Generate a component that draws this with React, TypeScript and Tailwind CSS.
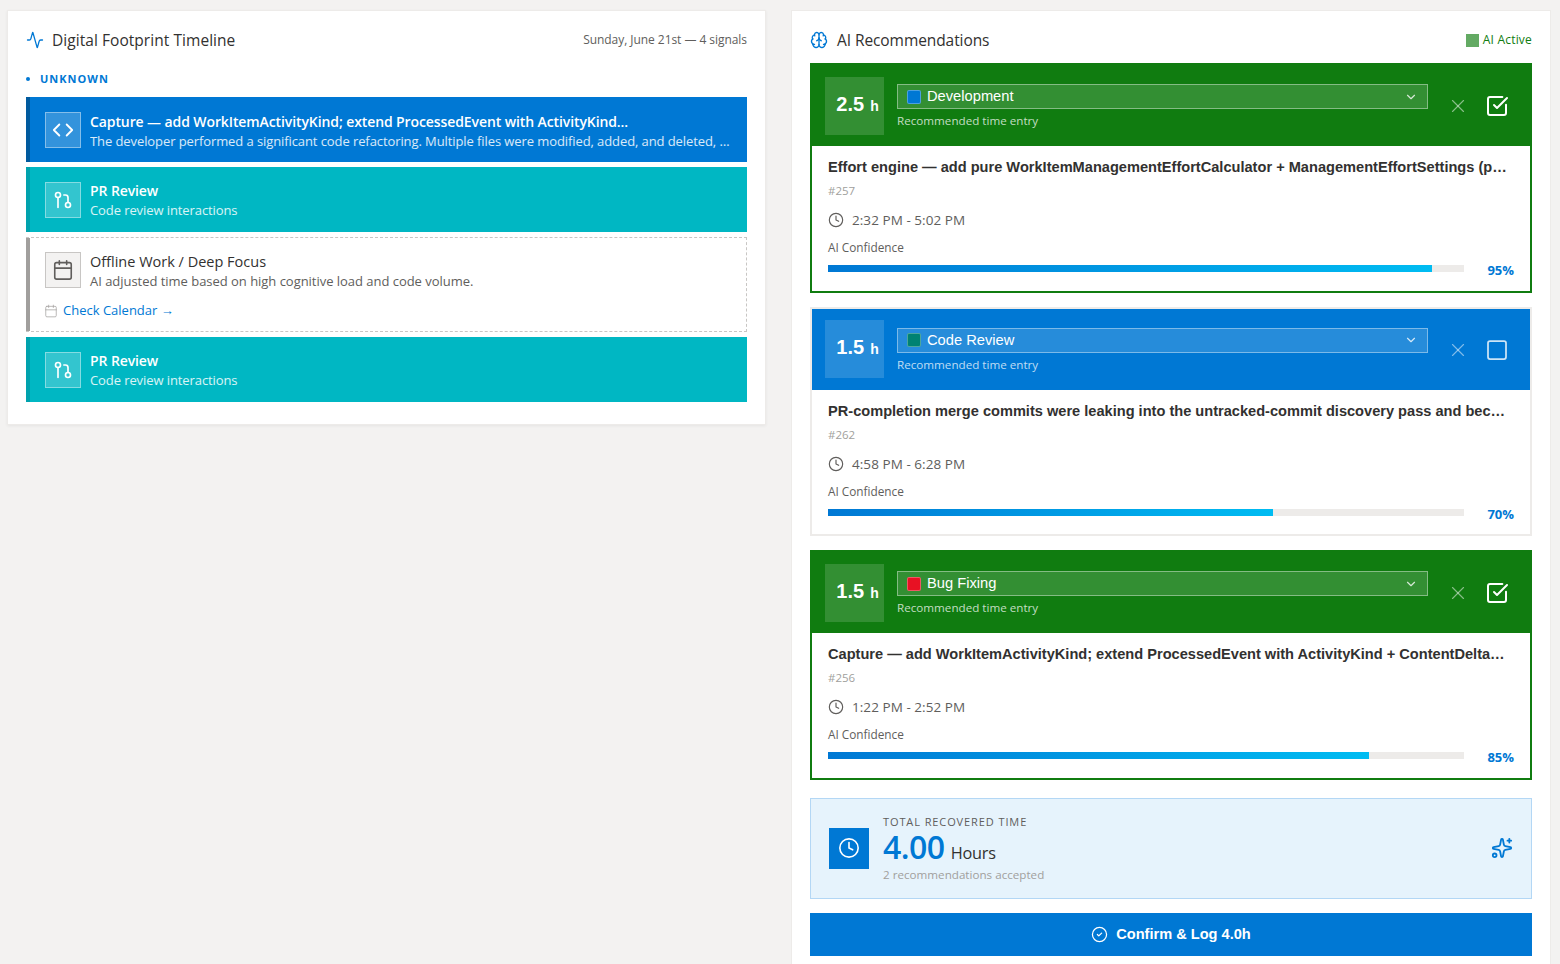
import { Activity, Brain, Code, Calendar, Clock, ChevronDown, X, SquareCheckBig, Square, CircleCheck, Sparkles } from "lucide-react";

const seg = "font-['Open_Sans',sans-serif]";

function Pr() {
  return (
    <svg width="20" height="20" viewBox="0 0 24 24" fill="none" stroke="currentColor" strokeWidth="2" strokeLinecap="round" strokeLinejoin="round">
      <circle cx="6" cy="6" r="3" />
      <circle cx="18" cy="18" r="3" />
      <path d="M6 9v12" />
      <path d="M13 6h2a3 3 0 0 1 3 3v6" />
    </svg>
  );
}

function TimelineItem({ kind, title, sub }: { kind: "blue" | "teal"; title: string; sub: string }) {
  const blue = kind === "blue";
  return (
    <div className={`flex h-[65px] items-center gap-[9px] border-l-4 pl-[15px] pr-[17px] text-white ${blue ? "bg-[#0078d4] border-[#005a9e]" : "bg-[#00b7c3] border-[#00a2ad]"}`}>
      <div className="flex h-9 w-9 shrink-0 items-center justify-center border border-white/40 bg-white/20">
        {blue ? <Code size={22} strokeWidth={2} /> : <Pr />}
      </div>
      <div className={`min-w-0 flex-1 ${blue ? "pt-[4px]" : "pt-[2px]"}`}>
        <div className={`truncate text-[14px] font-semibold leading-[20px] tracking-[-0.1px] ${seg}`}>{title}</div>
        <div className={`truncate text-[13px] leading-[19px] text-white/85 tracking-[-0.09px] ${seg}`}>{sub}</div>
      </div>
    </div>
  );
}

function Card({ color, hours, cat, swatch, title, id, time, pct, checked, barW }: { color: "green" | "blue"; hours: string; cat: string; swatch: string; title: string; id: string; time: string; pct: number; checked: boolean; barW: string }) {
  const green = color === "green";
  return (
    <div className={`border-2 ${green ? "border-[#107c10]" : "border-[#edebe9]"} bg-white`}>
      <div className={`flex h-[81px] items-center pl-[13px] pr-[21px] ${green ? "bg-[#107c10]" : "bg-[#0078d4]"}`}>
        <div className="flex h-[58px] w-[59px] shrink-0 items-baseline justify-center bg-white/15 pl-[6px] pt-[13px] font-['Liberation_Sans',sans-serif] font-bold text-white">
          <span className="text-[20px] leading-[28px]">{hours}</span>
          <span className="ml-[6px] text-[14px] leading-[28px]">h</span>
        </div>
        <div className="ml-[13px] min-w-0 flex-1 self-start pt-[19px]">
          <div className="flex h-[25px] items-center border border-white/40 bg-white/15 pl-[9px] pr-[9px] text-white">
            <span className="h-[14px] w-[14px] shrink-0 rounded-[2px] border border-white/30" style={{ backgroundColor: swatch }} />
            <span className="ml-[6px] flex-1 font-['Liberation_Sans',sans-serif] text-[14.7px] leading-[23px]">{cat}</span>
            <ChevronDown size={14} className="text-white/80" />
          </div>
          <div className={`mt-[3px] text-[11.65px] leading-[18px] text-white/75 ${seg}`}>Recommended time entry</div>
        </div>
        <X size={22} strokeWidth={1.25} className="ml-[19px] mt-[1px] shrink-0 text-white/50" />
        <div className="ml-[16px] mt-[1px] shrink-0 text-white">
          {checked ? <SquareCheckBig size={24} strokeWidth={2} /> : <Square size={24} strokeWidth={1.75} className="text-white/80" />}
        </div>
      </div>
      <div className="px-[16px] pb-[18.6px] pt-[11px]">
        <div className="truncate font-['Liberation_Sans',sans-serif] text-[14.6px] font-bold leading-[20px] text-[#323130]">{title}</div>
        <div className={`mt-[6px] text-[11.5px] leading-[16px] text-[#a19f9d] ${seg}`}>{id}</div>
        <div className="mt-[11px] flex items-center text-[#605e5c]">
          <Clock size={16} strokeWidth={1.75} />
          <span className={`ml-[8px] text-[13.5px] leading-[20px] tracking-[0.05px] ${seg}`}>{time}</span>
        </div>
        <div className={`mt-[9px] text-[11.8px] leading-[16px] text-[#605e5c] ${seg}`}>AI Confidence</div>
        <div className="mt-[10px] flex h-[7px] items-start">
          <div className="h-[7px] w-[636px] bg-[#edebe9]">
            <div className="h-full bg-gradient-to-r from-[#0078d4] to-[#00bcf2]" style={{ width: barW }} />
          </div>
          <span className={`-mt-[3px] ml-auto text-[13px] font-bold leading-[16px] text-[#0078d4] ${seg}`}>{pct}%</span>
        </div>
      </div>
    </div>
  );
}

export default function App() {
  return (
    <div className={`flex h-[964px] items-start gap-[25px] overflow-hidden bg-[#f3f2f1] pl-[7px] pr-[9px] pt-[10px] ${seg}`}>
      <section className="w-[759px] border border-[#edebe9] bg-white px-[18px] pb-[22px] pt-[17px] shadow-[0_1px_3px_rgba(0,0,0,0.06)]">
        <div className="flex h-[24px] items-center">
          <Activity size={18} strokeWidth={1.75} className="text-[#0078d4]" />
          <h2 className="ml-[8px] text-[15.5px] font-normal leading-[24px] tracking-[0.05px] text-[#323130]">Digital Footprint Timeline</h2>
          <span className="ml-auto text-[12px] tracking-[-0.05px] text-[#605e5c]">Sunday, June 21st — 4 signals</span>
        </div>
        <div className="mt-[19px] flex h-[16px] items-center text-[#0078d4]">
          <span className="h-[4px] w-[4px] rounded-full bg-[#0078d4]" />
          <span className="ml-[10px] text-[11px] font-bold tracking-[1px]">UNKNOWN</span>
        </div>
        <div className="mt-[10px] flex flex-col gap-[5px]">
          <TimelineItem kind="blue" title="Capture — add WorkItemActivityKind; extend ProcessedEvent with ActivityKind..." sub="The developer performed a significant code refactoring. Multiple files were modified, added, and deleted, indicating a major restructuring effort" />
          <TimelineItem kind="teal" title="PR Review" sub="Code review interactions" />
          <div className="h-[95px] border border-l-0 border-dashed border-[#c8c6c4]">
            <div className="h-full border-l-4 border-[#a19f9d] pl-[15px] pr-[17px] pt-[14px]">
              <div className="flex items-start gap-[9px]">
                <div className="flex h-9 w-9 shrink-0 items-center justify-center border border-[#c8c6c4] bg-[#f3f2f1] text-[#605e5c]">
                  <Calendar size={22} strokeWidth={1.75} />
                </div>
                <div>
                  <div className="text-[14.5px] leading-[20px] text-[#323130]">Offline Work / Deep Focus</div>
                  <div className="text-[13px] leading-[19px] tracking-[-0.03px] text-[#605e5c]">AI adjusted time based on high cognitive load and code volume.</div>
                </div>
              </div>
              <div className="mt-[10px] flex items-center">
                <Calendar size={14} strokeWidth={1.25} className="-ml-[1px] text-[#a19f9d]" />
                <span className="ml-[5px] text-[13px] leading-[18px] text-[#0078d4]">Check Calendar <span className="font-['Liberation_Sans',sans-serif]">→</span></span>
              </div>
            </div>
          </div>
          <TimelineItem kind="teal" title="PR Review" sub="Code review interactions" />
        </div>
      </section>

      <section className="w-[760px] border border-[#edebe9] bg-white px-[18px] pb-4 pt-[17px]">
        <div className="flex h-[24px] items-center">
          <Brain size={18} strokeWidth={1.75} className="text-[#0078d4]" />
          <h2 className="ml-[9px] text-[15.5px] font-normal leading-[24px] tracking-[-0.08px] text-[#323130]">AI Recommendations</h2>
          <span className="ml-auto flex items-center text-[12px] tracking-[0.2px] text-[#107c10]">
            <span className="mr-[4px] h-[13px] w-[13px] bg-[#107c10]/65" />AI Active
          </span>
        </div>
        <div className="mt-[11px] flex flex-col gap-[14px]">
          <Card color="green" hours="2.5" cat="Development" swatch="#0078d4" title="Effort engine — add pure WorkItemManagementEffortCalculator + ManagementEffortSettings (pure, deterministic)" id="#257" time="2:32 PM - 5:02 PM" pct={95} barW="95%" checked />
          <Card color="blue" hours="1.5" cat="Code Review" swatch="#008272" title="PR-completion merge commits were leaking into the untracked-commit discovery pass and becoming events" id="#262" time="4:58 PM - 6:28 PM" pct={70} barW="70%" checked={false} />
          <Card color="green" hours="1.5" cat="Bug Fixing" swatch="#e81123" title="Capture — add WorkItemActivityKind; extend ProcessedEvent with ActivityKind + ContentDeltaMetrics fields and more" id="#256" time="1:22 PM - 2:52 PM" pct={85} barW="85%" checked />
        </div>
        <div className="mt-[18.2px] flex h-[101px] items-center border border-[#b3d7f5] bg-[#e6f3fc] px-[18px]">
          <div className="flex h-[41px] w-10 items-center justify-center bg-[#0078d4] text-white">
            <Clock size={22} strokeWidth={1.75} />
          </div>
          <div className="ml-[14px]">
            <div className="text-[11px] leading-[15px] tracking-[0.9px] text-[#605e5c]">TOTAL RECOVERED TIME</div>
            <div className="flex h-[35px] items-baseline">
              <span className="text-[32px] font-semibold leading-[35px] tracking-[-0.5px] text-[#0078d4]">4.00</span>
              <span className="ml-[6px] text-[16.3px] leading-[24px] tracking-[-0.2px] text-[#323130]">Hours</span>
            </div>
            <div className="mt-[3px] text-[11.65px] leading-[16px] text-[#a19f9d]">2 recommendations accepted</div>
          </div>
          <Sparkles size={22} strokeWidth={2} className="-mt-[1px] ml-auto text-[#0078d4]" />
        </div>
        <button className="mt-[14px] flex h-[43px] w-full items-center justify-center bg-[#0078d4] font-['Liberation_Sans',sans-serif] text-[14.6px] font-bold text-white">
          <CircleCheck size={17} strokeWidth={1.75} className="mr-[8px]" />
          Confirm &amp; Log 4.0h
        </button>
      </section>
    </div>
  );
}
